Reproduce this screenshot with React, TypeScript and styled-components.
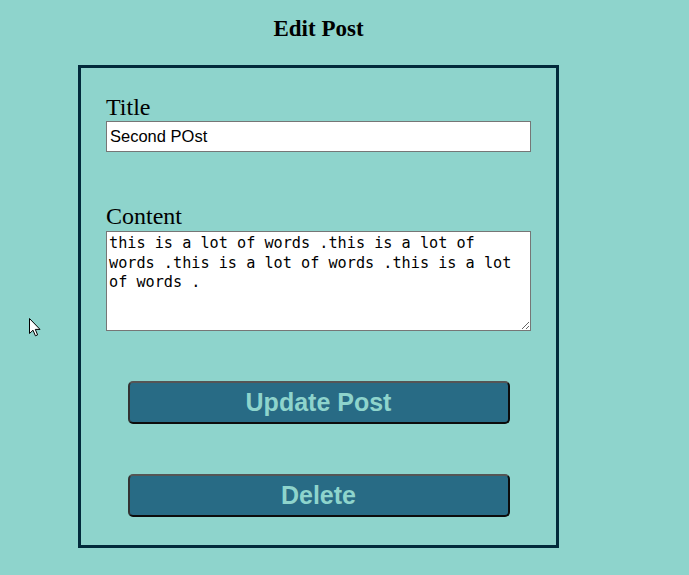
import React, { useState } from "react";
import styled, { createGlobalStyle } from "styled-components";

const GlobalStyle = createGlobalStyle`
  html, body {
    margin: 0;
    padding: 0;
    background: #8ed4cc;
  }
  body {
    min-height: 575px;
    font-family: "Liberation Serif", "Times New Roman", serif;
  }
`;

const Page = styled.div`
  position: relative;
  padding-top: 16px;
  padding-left: 78px;
`;

const Heading = styled.h2`
  width: 481px;
  margin: 0 0 23px;
  font-family: "Liberation Serif", "Times New Roman", serif;
  font-size: 23px;
  line-height: 26px;
  font-weight: bold;
  text-align: center;
  color: #000;
`;

const FormBox = styled.form`
  box-sizing: border-box;
  width: 481px;
  border: 3px solid #022a3b;
  padding: 25px 25px 28px;
  display: flex;
  flex-direction: column;
`;

const Label = styled.label<{ $gap?: number }>`
  display: block;
  margin-top: ${(p) => p.$gap ?? 0}px;
  font-family: "Liberation Serif", "Times New Roman", serif;
  font-size: 24px;
  line-height: 28px;
  color: #000;
`;

const TextInput = styled.input`
  box-sizing: border-box;
  width: 425px;
  height: 31px;
  margin: 0;
  padding: 1px 3px;
  border: 1px solid #767676;
  background: #fff;
  font-family: "Liberation Sans", Arial, sans-serif;
  font-size: 16.5px;
  color: #000;
  outline: none;
`;

const TextArea = styled.textarea`
  box-sizing: border-box;
  width: 425px;
  height: 100px;
  margin: 1px 0 0;
  padding: 2px;
  border: 1px solid #767676;
  background: #fff;
  font-family: "DejaVu Sans Mono", "Liberation Mono", monospace;
  font-size: 15.2px;
  line-height: 19.5px;
  color: #000;
  outline: none;
`;

const ActionButton = styled.button<{ $gap: number }>`
  box-sizing: border-box;
  align-self: center;
  width: 382px;
  height: 43px;
  margin-top: ${(p) => p.$gap}px;
  padding: 0;
  border: 2px solid #0c0c0c;
  border-top-color: #555;
  border-left-color: #333;
  border-radius: 5px;
  background: #286b85;
  color: #8ed4cc;
  font-family: "Liberation Sans", Arial, sans-serif;
  font-size: 25px;
  font-weight: bold;
  cursor: pointer;
`;

const Pointer = styled.svg`
  position: absolute;
  left: 29px;
  top: 318px;
`;

export default function App() {
  const [title, setTitle] = useState("Second POst");
  const [content, setContent] = useState(
    "this is a lot of words .this is a lot of words .this is a lot of words .this is a lot of words ."
  );

  return (
    <>
      <GlobalStyle />
      <Page>
        <Heading>Edit Post</Heading>
        <FormBox onSubmit={(e) => e.preventDefault()}>
          <Label htmlFor="title">Title</Label>
          <TextInput
            id="title"
            value={title}
            onChange={(e) => setTitle(e.target.value)}
          />
          <Label htmlFor="content" $gap={50}>
            Content
          </Label>
          <TextArea
            id="content"
            value={content}
            onChange={(e) => setContent(e.target.value)}
          />
          <ActionButton type="submit" $gap={50}>
            Update Post
          </ActionButton>
          <ActionButton type="button" $gap={50}>
            Delete
          </ActionButton>
        </FormBox>
        <Pointer width="12" height="19" viewBox="0 0 12 19">
          <path
            d="M0.5 0.5 L0.5 15.5 L4 12.2 L6.4 17.8 L8.6 16.9 L6.3 11.4 L11 11.4 Z"
            fill="#fff"
            stroke="#000"
            strokeWidth="1"
            strokeLinejoin="miter"
          />
        </Pointer>
      </Page>
    </>
  );
}
